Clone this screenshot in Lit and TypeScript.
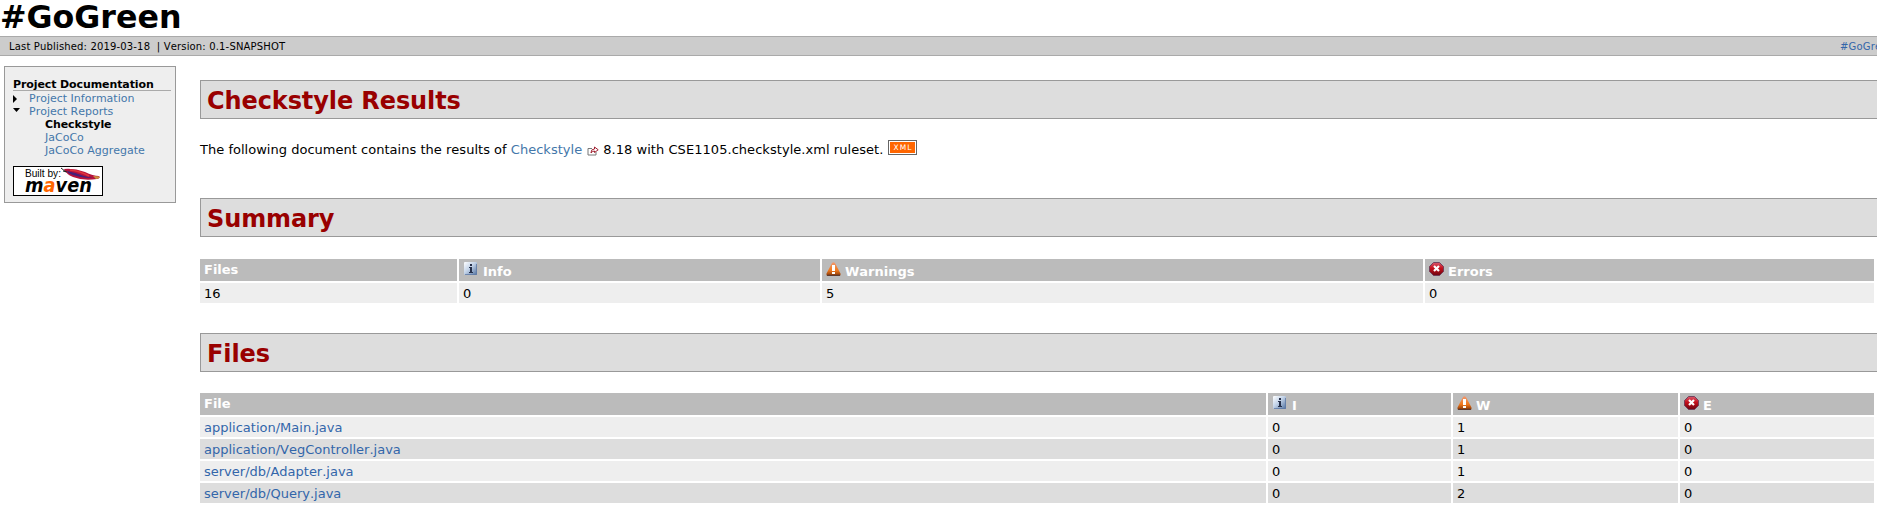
import { LitElement, html, css } from "lit";
import { customElement } from "lit/decorators.js";

const info = html`<svg class="ic info" width="14" height="14" viewBox="0 0 14 14">
  <defs><linearGradient id="gi" x1="0" y1="0" x2="1" y2="1"><stop offset="0" stop-color="#fff"/><stop offset=".45" stop-color="#c3d3e8"/><stop offset="1" stop-color="#4e6f9e"/></linearGradient></defs>
  <rect x="0" y="0" width="13" height="13" rx="1" fill="url(#gi)"/><path d="M1 12.500h11.500V2" stroke="#5f7aa4" stroke-width=".8" fill="none"/>
  <path d="M6 2h2v2H6zM5 5h3v5h1v1H5v-1h1V6H5z" fill="#26304a"/></svg>`;
const warn = html`<svg class="ic" width="15" height="14" viewBox="0 0 15 14">
  <defs><linearGradient id="gw" x1="0" y1="0" x2="0" y2="1"><stop offset="0" stop-color="#f09a72"/><stop offset=".6" stop-color="#f0781c"/><stop offset="1" stop-color="#8a3a08"/></linearGradient></defs>
  <path d="M7.500.3q1 0 1.600 1L14.500 11.500Q15 13.700 13.500 13.700H1.500Q0 13.700.5 11.500L5.900 1.300q.6-1 1.600-1z" fill="url(#gw)"/>
  <path d="M1 13.300h13" stroke="#4a2b28" stroke-width=".9"/><path d="M6 3h3v6H6zM6 10h3v2H6z" fill="#fff"/></svg>`;
const err = html`<svg class="ic" width="15" height="14" viewBox="0 0 15 14">
  <defs><linearGradient id="ge" x1="0" y1="0" x2="0" y2="1"><stop offset="0" stop-color="#d8586c"/><stop offset=".45" stop-color="#c4101c"/><stop offset="1" stop-color="#6c0410"/></linearGradient></defs>
  <path d="M4.500.5h6l4 4v5l-4 4h-6l-4-4v-5z" fill="url(#ge)" stroke="#6b3a58" stroke-width=".9"/>
  <path d="M5 4l5 5M10 4L5 9" stroke="#fff" stroke-width="2.200"/></svg>`;

const files: [string, number, string][] = [
  ["application/Main.java", 1, "0"],
  ["application/VegController.java", 1, "0"],
  ["server/db/Adapter.java", 1, "0"],
  ["server/db/Query.java", 2, "0"],
];

@customElement("app-root")
export class AppRoot extends LitElement {
  static styles = css`
    :host { display: block; width: 1877px; height: 505px; overflow: hidden; background: #fff; color: #000;
      font-family: Verdana, "DejaVu Sans", sans-serif; font-size: 13px; white-space: nowrap; font-kerning: none; }
    * { box-sizing: border-box; }
    a { color: #4477aa; text-decoration: none; }
    .title { height: 36px; line-height: 34px; font-size: 31.700px; font-weight: bold; }
    .crumbs { height: 20px; padding-left: 9px; background: #ccc; border: solid #aaa; border-width: 1px 0; display: flex; justify-content: space-between; font-size: 10px; letter-spacing: .16px; line-height: 19px; }
    .crumbs pre { margin: 0; font: inherit; }
    .right { width: 37px; overflow: hidden; }
    .right a, .files a { color: #36a; }
    .page { display: flex; align-items: flex-start; }
    .nav { width: 172px; height: 137px; margin: 10px 24px 0 4px; padding: 10px 4px 0 8px; background: #eee; border: 1px solid #999; font-size: 11px; line-height: 13px; }
    .nav h5 { margin: 0 0 1px; height: 14px; line-height: 15px; font-size: 11px; border-bottom: 1px solid #aaa; }
    .nav h5, .nav b { letter-spacing: -.1px; }
    .item { display: flex; height: 13px; }
    .item svg { width: 16px; height: 13px; flex: none; }
    .sub { padding-left: 32px; height: 13px; }
    .logo { display: block; margin-top: 9px; }
    .main { flex: 1; padding-top: 24px; min-width: 0; }
    h2 { margin: 0; height: 39px; line-height: 40px; padding: 0 0 0 6px; background: #ddd; border: 1px solid #999; border-right: 0; color: #900; font-size: 24px; letter-spacing: -.1px; }
    .intro { display: flex; align-items: center; height: 79px; line-height: 16px; padding-bottom: 17px; letter-spacing: .02px; }
    .rules { letter-spacing: .05px; }
    .ext { width: 12px; height: 10px; margin: 2px 4px 0 5px; }
    .xml { width: 29px; height: 15px; margin: 0 0 6px 5px; letter-spacing: 0; }
    .grid { display: grid; gap: 2px; margin-right: 3px; }
    .summary { grid-template-columns: 257px 361px 601px 449px; margin: 22px 3px 30px 0; }
    .files { grid-template-columns: 1066px 183px 225px 194px; margin-top: 21px; }
    .th { height: 22px; padding-left: 4px; background: #bbb; color: #fff; font-weight: bold; line-height: 21px; display: flex; }
    .th span { padding-top: 2px; }
    .ic { margin: 3px 4px 0 0; flex: none; }
    .info { margin: 3px 5px 0 1px; }
    .td { height: 20px; padding-left: 4px; background: #eee; line-height: 21px; }
    .odd { background: #ddd; }
  `;

  render() {
    return html`
      <div class="title">#GoGreen</div>
      <div class="crumbs"><pre>Last Published: 2019-03-18 &nbsp;| Version: 0.1-SNAPSHOT</pre><div class="right"><a>#GoGreen</a></div></div>
      <div class="page">
        <div class="nav">
          <h5>Project Documentation</h5>
          <div class="item"><svg viewBox="0 0 16 13"><path d="M0 3l4 4-4 4z"/></svg><a>Project Information</a></div>
          <div class="item"><svg viewBox="0 0 16 13"><path d="M0 3h7L3.500 7z"/></svg><a>Project Reports</a></div>
          <div class="sub"><b>Checkstyle</b></div>
          <div class="sub"><a>JaCoCo</a></div>
          <div class="sub"><a>JaCoCo Aggregate</a></div>
          <svg class="logo" width="90" height="30" viewBox="0 0 90 30">
            <rect x=".5" y=".5" width="89" height="29" fill="#fff" stroke="#000"/>
            <text x="12" y="11" font-family="Liberation Sans" font-size="10.200" textLength="36" lengthAdjust="spacingAndGlyphs">Built by:</text>
            <text x="12" y="26" font-family="DejaVu Sans, sans-serif" font-weight="bold" font-style="italic" font-size="20" textLength="67" lengthAdjust="spacingAndGlyphs">m<tspan fill="#f60">a</tspan>ven</text>
            <path d="M51 3Q61 2 72 6Q80 10 86 10Q88 12 84 13Q70 15 60 11Q53 8 51 3z" fill="#b5123c"/>
            <path d="M54 5Q64 7 71 10L80 12Q65 12 55 7z" fill="#45207a"/>
            <path d="M57 4Q67 5 76 10" stroke="#e0343c" stroke-width="1.500" fill="none"/>
            <path d="M80 10l6 .5q2 1.500-3 2.500z" fill="#c9953c"/>
            <path d="M48 2l5 4M50 5l4 1" stroke="#222" stroke-width="1"/>
          </svg>
        </div>
        <div class="main">
          <h2>Checkstyle Results</h2>
          <div class="intro">
            <span>The following document contains the results of <a>Checkstyle</a></span>
            <svg class="ext" viewBox="0 0 12 10"><path d="M5 2.500H1v6.500h8V6" fill="none" stroke="#777"/><path d="M4 6.500Q4 3 7.500 3V1l3.700 2.800L7.500 6.500V5Q5.500 5 4 7z" fill="#fff" stroke="#a02030" stroke-width="1"/></svg>
            <span class="rules">8.18 with CSE1105.checkstyle.xml ruleset.</span>
            <svg class="xml" viewBox="0 0 29 15"><rect x=".5" y=".5" width="28" height="14" fill="#fff" stroke="#666"/><rect x="2" y="2" width="25" height="11" fill="#f60"/><text x="5.500" y="10.300" fill="#fff" font-family="DejaVu Sans" font-size="7.500" textLength="18">XML</text></svg>
          </div>
          <h2>Summary</h2>
          <div class="grid summary">
            <div class="th">Files</div><div class="th">${info}<span>Info</span></div><div class="th">${warn}<span>Warnings</span></div><div class="th">${err}<span>Errors</span></div>
            <div class="td">16</div><div class="td">0</div><div class="td">5</div><div class="td">0</div>
          </div>
          <h2>Files</h2>
          <div class="grid files">
            <div class="th">File</div><div class="th">${info}<span>I</span></div><div class="th">${warn}<span>W</span></div><div class="th">${err}<span>E</span></div>
            ${files.map(([name, w, e], i) => {
              const c = i % 2 ? "td odd" : "td";
              return html`<div class=${c}><a>${name}</a></div><div class=${c}>0</div><div class=${c}>${w}</div><div class=${c}>${e}</div>`;
            })}
          </div>
        </div>
      </div>`;
  }
}
